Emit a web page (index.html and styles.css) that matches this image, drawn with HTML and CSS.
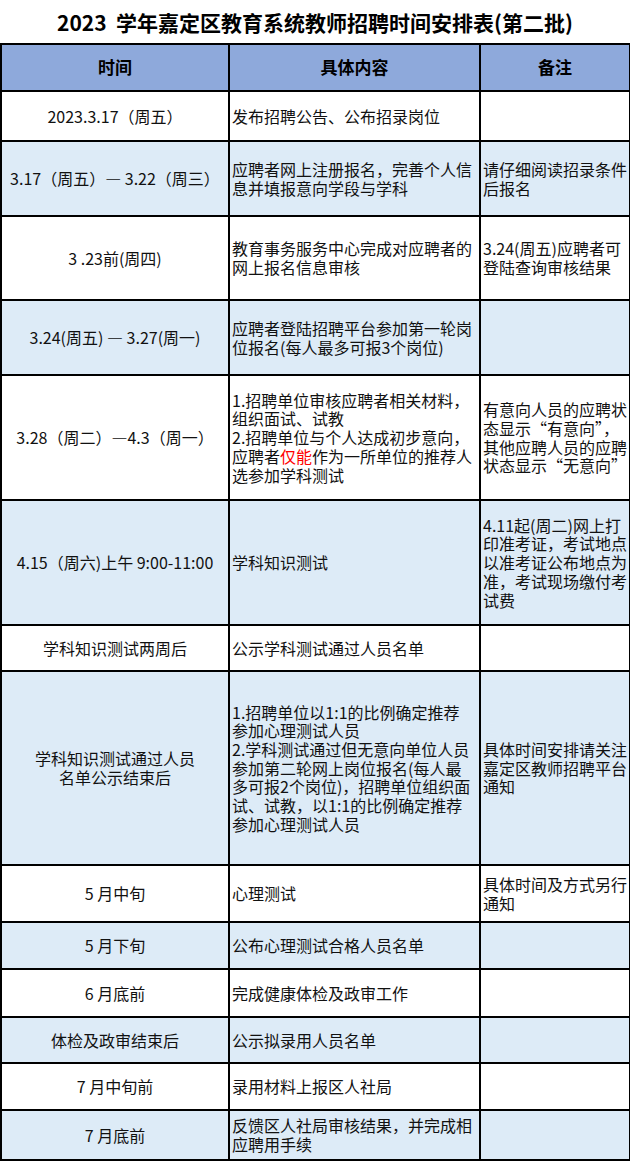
FILE: index.html
```html
<!DOCTYPE html>
<html lang="zh-CN">
<head>
<meta charset="utf-8">
<title>2023 学年嘉定区教育系统教师招聘时间安排表(第二批)</title>
<link rel="stylesheet" href="styles.css">
</head>
<body>
<div class="page">
  <h1 class="title">2023&nbsp; 学年嘉定区教育系统教师招聘时间安排表(第二批)</h1>
  <table class="sched">
    <colgroup>
      <col class="col-time">
      <col class="col-desc">
      <col class="col-note">
    </colgroup>
    <thead>
      <tr class="hd h47">
        <th>时间</th>
        <th>具体内容</th>
        <th>备注</th>
      </tr>
    </thead>
    <tbody>
      <tr class="h50">
        <td class="c-time">2023.3.17（周五）</td>
        <td class="c-desc">发布招聘公告、公布招录岗位</td>
        <td class="c-note"></td>
      </tr>
      <tr class="alt h75">
        <td class="c-time">3.17（周五）— 3.22（周三）</td>
        <td class="c-desc">应聘者网上注册报名，完善个人信<br>息并填报意向学段与学科</td>
        <td class="c-note">请仔细阅读招录条件<br>后报名</td>
      </tr>
      <tr class="h84">
        <td class="c-time">3 .23前(周四)</td>
        <td class="c-desc">教育事务服务中心完成对应聘者的<br>网上报名信息审核</td>
        <td class="c-note">3.24(周五)应聘者可<br>登陆查询审核结果</td>
      </tr>
      <tr class="alt h75">
        <td class="c-time">3.24(周五) — 3.27(周一)</td>
        <td class="c-desc">应聘者登陆招聘平台参加第一轮岗<br>位报名(每人最多可报3个岗位)</td>
        <td class="c-note"></td>
      </tr>
      <tr class="h125">
        <td class="c-time">3.28（周二）—4.3（周一）</td>
        <td class="c-desc">1.招聘单位审核应聘者相关材料，<br>组织面试、试教<br>2.招聘单位与个人达成初步意向，<br>应聘者<span class="red">仅能</span>作为一所单位的推荐人<br>选参加学科测试</td>
        <td class="c-note">有意向人员的应聘状<br>态显示“有意向”，<br>其他应聘人员的应聘<br>状态显示“无意向”</td>
      </tr>
      <tr class="alt h125">
        <td class="c-time">4.15（周六)上午 9:00-11:00</td>
        <td class="c-desc">学科知识测试</td>
        <td class="c-note">4.11起(周二)网上打<br>印准考证，考试地点<br>以准考证公布地点为<br>准，考试现场缴付考<br>试费</td>
      </tr>
      <tr class="h46">
        <td class="c-time">学科知识测试两周后</td>
        <td class="c-desc">公示学科测试通过人员名单</td>
        <td class="c-note"></td>
      </tr>
      <tr class="alt h194">
        <td class="c-time">学科知识测试通过人员<br>名单公示结束后</td>
        <td class="c-desc">1.招聘单位以1:1的比例确定推荐<br>参加心理测试人员<br>2.学科测试通过但无意向单位人员<br>参加第二轮网上岗位报名(每人最<br>多可报2个岗位)，招聘单位组织面<br>试、试教，以1:1的比例确定推荐<br>参加心理测试人员</td>
        <td class="c-note">具体时间安排请关注<br>嘉定区教师招聘平台<br>通知</td>
      </tr>
      <tr class="h57">
        <td class="c-time">5 月中旬</td>
        <td class="c-desc">心理测试</td>
        <td class="c-note">具体时间及方式另行<br>通知</td>
      </tr>
      <tr class="alt h47">
        <td class="c-time">5 月下旬</td>
        <td class="c-desc">公布心理测试合格人员名单</td>
        <td class="c-note"></td>
      </tr>
      <tr class="h48">
        <td class="c-time">6 月底前</td>
        <td class="c-desc">完成健康体检及政审工作</td>
        <td class="c-note"></td>
      </tr>
      <tr class="alt h46">
        <td class="c-time">体检及政审结束后</td>
        <td class="c-desc">公示拟录用人员名单</td>
        <td class="c-note"></td>
      </tr>
      <tr class="h47">
        <td class="c-time">7 月中旬前</td>
        <td class="c-desc">录用材料上报区人社局</td>
        <td class="c-note"></td>
      </tr>
      <tr class="alt h50">
        <td class="c-time">7 月底前</td>
        <td class="c-desc">反馈区人社局审核结果，并完成相<br>应聘用手续</td>
        <td class="c-note"></td>
      </tr>
    </tbody>
  </table>
</div>
</body>
</html>
```

FILE: styles.css
```css
html, body {
  margin: 0;
  padding: 0;
  background: #ffffff;
}

body {
  font-family: "Noto Sans CJK SC", "Noto Sans", sans-serif;
  color: #111111;
}

.page {
  width: 630px;
}

.title {
  margin: 0;
  height: 43px;
  display: flex;
  align-items: center;
  justify-content: center;
  font-size: 21px;
  font-weight: 700;
  color: #000000;
}

.sched {
  border-collapse: collapse;
  table-layout: fixed;
  width: 629px;
  font-size: 16px;
  line-height: 18.7px;
}

.col-time { width: 228px; }
.col-desc { width: 251px; }
.col-note { width: 150px; }

.sched th,
.sched td {
  border: 2px solid #000000;
  vertical-align: middle;
  padding: 0 2px;
  white-space: nowrap;
  overflow: hidden;
}

.hd th {
  background: #8ea9db;
  font-weight: 700;
  font-size: 17px;
  color: #000000;
  text-align: center;
}

.alt td {
  background: #ddebf7;
}

.c-time {
  text-align: center;
}

.c-desc,
.c-note {
  text-align: left;
}

.red {
  color: #ff0000;
}

.h46 { height: 46px; }
.h47 { height: 47px; }
.h48 { height: 48px; }
.h50 { height: 50px; }
.h57 { height: 57px; }
.h75 { height: 75px; }
.h84 { height: 84px; }
.h125 { height: 125px; }
.h194 { height: 194px; }
```
